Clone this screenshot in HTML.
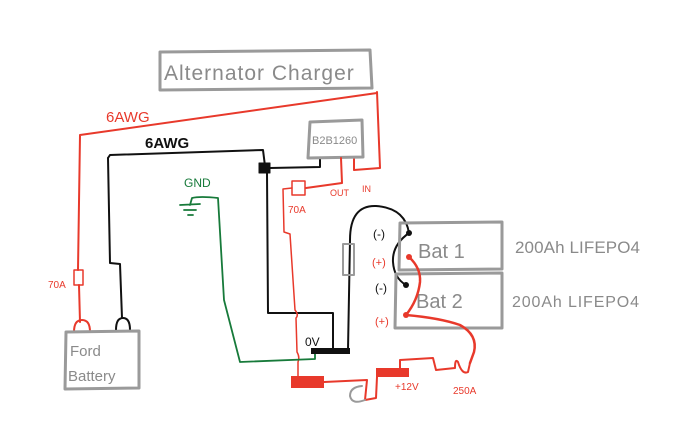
<!DOCTYPE html>
<html><head><meta charset="utf-8"><style>
html,body{margin:0;padding:0;background:#fff;}
svg{display:block}
text{font-family:"Liberation Sans",sans-serif;}
</style></head><body>
<svg width="680" height="440" viewBox="0 0 680 440" xmlns="http://www.w3.org/2000/svg" fill="none" stroke-linecap="round" stroke-linejoin="round">
<path d="M160 52 L370 50 L372 88 L160 90 Z" stroke="#9a9a9a" stroke-width="3"/>
<text x="164" y="80" font-size="21" fill="#8a8a8a" stroke="none" letter-spacing="1">Alternator  Charger</text>

<path d="M377 92 L380 168 L354 170 L354 158" stroke="#e8392b" stroke-width="2"/>
<path d="M377 93 L80 135 L78 270" stroke="#e8392b" stroke-width="2"/>
<rect x="74" y="270" width="9" height="15" stroke="#e8392b" stroke-width="1.5"/>
<path d="M79 285 L80 322" stroke="#e8392b" stroke-width="2"/>
<path d="M74 332 Q74 320 82 320 Q90 320 90 332" stroke="#e8392b" stroke-width="2"/>
<text x="48" y="288" font-size="10" fill="#e8392b" stroke="none">70A</text>
<text x="106" y="122" font-size="15" fill="#e8392b" stroke="none">6AWG</text>

<text x="145" y="148" font-size="15" fill="#111" stroke="none" font-weight="bold">6AWG</text>
<path d="M108 158 L110 155 L263 150 L265 166" stroke="#111" stroke-width="2"/>
<path d="M108 158 L110 263 L120 264 L122 318" stroke="#111" stroke-width="2"/>
<path d="M116 330 Q116 318 123 318 Q130 318 130 330" stroke="#111" stroke-width="2"/>
<rect x="259" y="163" width="11" height="10" fill="#111" stroke="#111"/>
<path d="M270 168 L320 167 L320 158" stroke="#111" stroke-width="2"/>
<path d="M267 173 L268 313 L333 313 L333 350" stroke="#111" stroke-width="2"/>

<path d="M310 122 L362 120 L363 157 L308 158 Z" stroke="#9a9a9a" stroke-width="3"/>
<text x="312" y="144" font-size="11" fill="#8a8a8a" stroke="none">B2B1260</text>

<path d="M341 158 L342 183 L306 188" stroke="#e8392b" stroke-width="2"/>
<rect x="292" y="181" width="13" height="14" stroke="#e8392b" stroke-width="1.5"/>
<path d="M292 188 L283 189 L284 232 L290 234 L295 310 Q299 315 296 318 L297 352 Q300 357 298 362 L298 376" stroke="#e8392b" stroke-width="1.5"/>
<text x="330" y="196" font-size="9" fill="#e8392b" stroke="none">OUT</text>
<text x="362" y="192" font-size="9" fill="#e8392b" stroke="none">IN</text>
<text x="288" y="213" font-size="10" fill="#e8392b" stroke="none">70A</text>

<text x="184" y="187" font-size="12" fill="#177a3a" stroke="none">GND</text>
<path d="M180 205 L200 204 M184 210 L196 210 M188 215 L193 215 M190 205 L192 198 Q200 196 218 198 L224 300 L240 362 L315 359 L315 351" stroke="#177a3a" stroke-width="1.8"/>

<text x="305" y="346" font-size="12" fill="#111" stroke="none">0V</text>
<rect x="311" y="348" width="39" height="6" fill="#111" stroke="none"/>
<path d="M348 350 L350 240 Q350 205 376 206 Q405 208 409 233" stroke="#111" stroke-width="2"/>
<path d="M409 233 Q392 245 393 262 Q394 278 406 285" stroke="#111" stroke-width="2"/>
<circle cx="409" cy="233" r="3" fill="#111" stroke="none"/>
<circle cx="406" cy="285" r="3" fill="#111" stroke="none"/>
<rect x="343" y="244" width="11" height="31" stroke="#9a9a9a" stroke-width="2"/>

<path d="M400 223 L502 222 L502 269 L399 270 Z" stroke="#9a9a9a" stroke-width="3"/>
<path d="M396 274 L502 273 L502 328 L395 328 Z" stroke="#9a9a9a" stroke-width="3"/>
<text x="418" y="258" font-size="20" fill="#8a8a8a" stroke="none">Bat 1</text>
<text x="416" y="308" font-size="20" fill="#8a8a8a" stroke="none">Bat 2</text>
<text x="515" y="253" font-size="17" fill="#8a8a8a" stroke="none" textLength="125">200Ah LIFEPO4</text>
<text x="512" y="307" font-size="16" fill="#8a8a8a" stroke="none" textLength="127">200Ah LIFEPO4</text>
<text x="373" y="238" font-size="12" fill="#111" stroke="none">(-)</text>
<text x="372" y="266" font-size="11" fill="#e8392b" stroke="none">(+)</text>
<text x="375" y="292" font-size="12" fill="#111" stroke="none">(-)</text>
<text x="375" y="325" font-size="11" fill="#e8392b" stroke="none">(+)</text>

<circle cx="409" cy="257" r="3" fill="#e8392b" stroke="none"/>
<circle cx="406" cy="315" r="3" fill="#e8392b" stroke="none"/>
<path d="M409 257 Q421 268 420 282 Q418 300 406 315 Q440 318 460 325 Q478 335 474 352 L470 363" stroke="#e8392b" stroke-width="2.5"/>
<path d="M470 363 L468 372 Q462 375 458 362 Q455 358 455 368 L436 370 L433 358 L400 360 L400 368" stroke="#e8392b" stroke-width="2"/>
<rect x="376" y="368" width="33" height="9" fill="#e8392b" stroke="none"/>
<path d="M377 377 L376 398 L365 400 L367 380 L324 382" stroke="#e8392b" stroke-width="2"/>
<rect x="291" y="376" width="33" height="12" fill="#e8392b" stroke="none"/>
<path d="M365 400 Q352 405 350 396 Q350 387 362 386" stroke="#9a9a9a" stroke-width="2"/>
<text x="395" y="390" font-size="10" fill="#e8392b" stroke="none">+12V</text>
<text x="453" y="394" font-size="10" fill="#e8392b" stroke="none">250A</text>

<path d="M66 332 L139 331 L139 388 L65 389 Z" stroke="#9a9a9a" stroke-width="3"/>
<text x="70" y="356" font-size="15" fill="#8a8a8a" stroke="none">Ford</text>
<text x="68" y="381" font-size="15" fill="#8a8a8a" stroke="none">Battery</text>
</svg>
</body></html>
